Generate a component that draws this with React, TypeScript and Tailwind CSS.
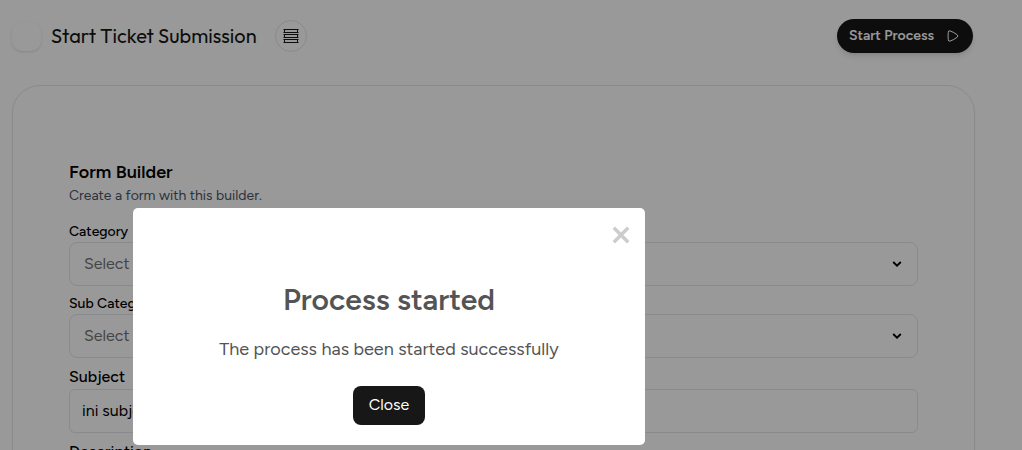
import { useState } from 'react';

interface SelectFieldProps {
  id: string;
  label: string;
}

function SelectField({ id, label }: SelectFieldProps) {
  return (
    <div>
      <label htmlFor={id} className="block pt-px text-sm font-medium text-black">
        {label}
      </label>
      <div className="relative">
        <select
          id={id}
          defaultValue=""
          className="h-11 w-full appearance-none rounded-lg border border-gray-200 bg-white px-3.5 text-base text-neutral-500"
        >
          <option value="">Select</option>
        </select>
        <svg
          viewBox="0 0 10 10"
          className="pointer-events-none absolute top-4 right-4 size-2.5"
          fill="none"
          stroke="black"
          strokeWidth="1.9"
          aria-hidden="true"
        >
          <path d="M1.2 4l3.8 3.6L8.8 4" />
        </svg>
      </div>
    </div>
  );
}

function RowsIcon() {
  return (
    <svg viewBox="0 0 16 16" className="size-4" fill="none" stroke="#171717" aria-hidden="true">
      <path d="M.5 1.5h15M.5 4.5h15M.5 6.5h15M.5 9.5h15M.5 11.5h15M.5 14.5h15" />
      <path d="M1.5 1.5v3M14.5 1.5v3M1.5 6.5v3M14.5 6.5v3M1.5 11.5v3M14.5 11.5v3" />
    </svg>
  );
}

function PlayIcon() {
  return (
    <svg
      viewBox="0 0 12 12"
      className="size-3"
      fill="none"
      stroke="currentColor"
      strokeLinejoin="round"
      aria-hidden="true"
    >
      <path d="M1.3 2.2Q1.3.4 3 .9Q7 2.2 10.2 4.8Q11.6 6 10.2 7.2Q7 9.8 3 11.1Q1.3 11.6 1.3 9.8Q.8 6 1.3 2.2Z" />
    </svg>
  );
}

function SuccessDialog({ onClose }: { onClose: () => void }) {
  return (
    <div className="fixed inset-0 bg-black/40 pt-52 pl-[133px]">
      <div
        role="dialog"
        aria-modal="true"
        aria-labelledby="dialog-title"
        className="relative flex w-full max-w-lg flex-col items-center rounded-[5px] bg-white pt-[70px] pb-5 text-[#545454]"
      >
        <button
          type="button"
          aria-label="Close this dialog"
          onClick={onClose}
          className="absolute top-[17px] right-3.5 text-[#ccc]"
        >
          <svg viewBox="0 0 20 20" className="size-5" fill="none" stroke="currentColor" strokeWidth="3.4">
            <path d="M2.8 2.8l14.4 14.4M17.2 2.8L2.8 17.2" />
          </svg>
        </button>
        <h2 id="dialog-title" className="text-[30px] leading-11 font-semibold">
          Process started
        </h2>
        <p className="pt-[13px] text-lg leading-7">The process has been started successfully</p>
        <button
          type="button"
          onClick={onClose}
          className="mt-[23px] h-[39px] w-18 rounded-lg bg-neutral-900 pb-px text-base text-white"
        >
          Close
        </button>
      </div>
    </div>
  );
}

export default function App() {
  const [open, setOpen] = useState(true);

  return (
    <div className="h-screen overflow-hidden bg-white pr-[47px] pl-3 font-['Figtree','Lato',sans-serif]">
      {/* Header */}
      <header className="flex h-[85px] items-start justify-between pt-[19px] pr-0.5">
        <div className="flex items-center pt-px">
          <span className="size-[29px] rounded-[10px] bg-white shadow-sm" />
          <h1 className="pl-2.5 font-['Outfit','Lato',sans-serif] text-xl text-neutral-900">
            Start Ticket Submission
          </h1>
          <button
            type="button"
            aria-label="Show rows"
            className="ml-[18px] flex size-8 items-center justify-center rounded-full border border-gray-200"
          >
            <RowsIcon />
          </button>
        </div>
        <button
          type="button"
          onClick={() => setOpen(true)}
          className="flex h-[34px] w-34 items-center justify-between rounded-full bg-neutral-900 pr-3.5 pl-3 text-sm font-semibold text-white shadow-md"
        >
          Start Process
          <PlayIcon />
        </button>
      </header>

      {/* Form */}
      <main className="rounded-t-[28px] border border-gray-200 px-14 pt-[72px] shadow-xs">
        <h2 className="text-lg leading-7 font-semibold text-black">Form Builder</h2>
        <p className="text-sm leading-5 text-gray-600">Create a form with this builder.</p>
        <form className="pt-[15px]" onSubmit={(e) => e.preventDefault()}>
          <div className="space-y-[7px]">
            <SelectField id="category" label="Category" />
            <SelectField id="sub-category" label="Sub Category" />
            <div>
              <label htmlFor="subject" className="block text-base font-medium text-black">
                Subject
              </label>
              <input
                id="subject"
                defaultValue="ini subject"
                className="h-11 w-full rounded-md border border-gray-200 bg-white px-3 pb-0.5 text-base text-black"
              />
            </div>
            <div>
              <label htmlFor="description" className="block text-base font-medium text-black">
                Description
              </label>
              <textarea id="description" rows={4} className="w-full rounded-md border border-gray-200" />
            </div>
          </div>
        </form>
      </main>

      {open && <SuccessDialog onClose={() => setOpen(false)} />}
    </div>
  );
}
